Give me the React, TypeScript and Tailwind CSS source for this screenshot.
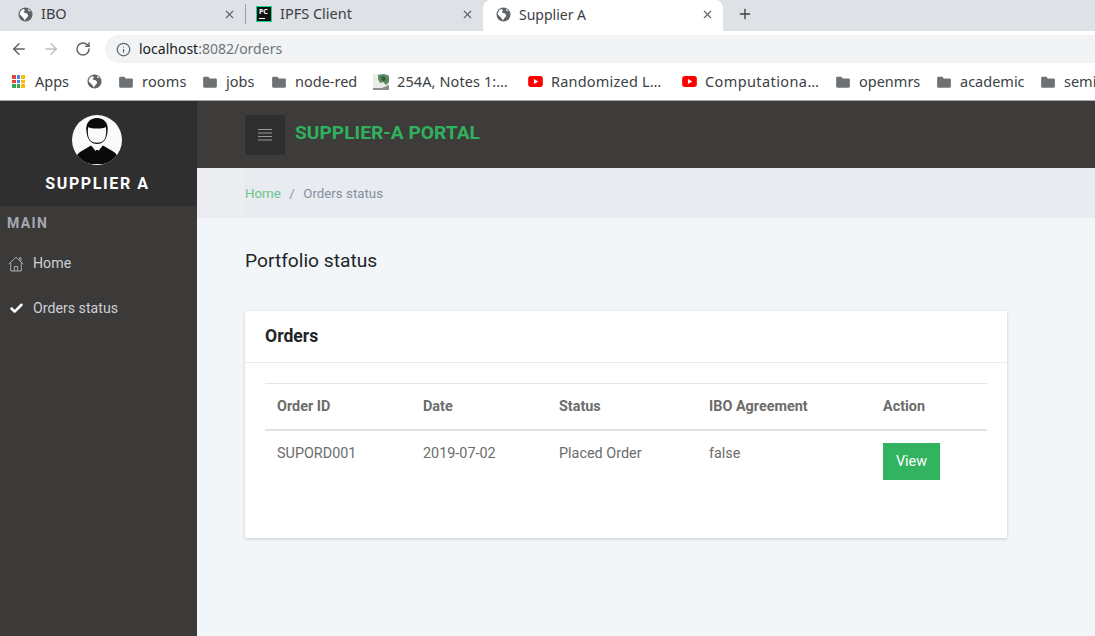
import { Check, Info, Plus, RotateCw, X, ArrowLeft, ArrowRight } from "lucide-react";

function Globe({ className }: { className?: string }) {
  return (
    <svg viewBox="0 0 16 16" className={className}>
      <circle cx="8" cy="8" r="7.500" fill="#5f6368" />
      <path
        d="M7.200 14.400c-.2-1-1.200-1.700-1.500-2.700L3 9 1.700 7.800C1.900 5 3.500 3 5.800 2.100L7.500 3.500 6.200 5l.6 1.200 2.400.4 1.600 1.800-.4 2-1.400 1.400-1.800 2.600zM10.500 2.200l.6 1.800 2.300.5.900 1.700c-.5-1.800-2-3.400-3.800-4z"
        fill="#fff"
      />
    </svg>
  );
}

function Folder() {
  return (
    <svg viewBox="0 0 16 14" className="h-[12px] w-[14px] shrink-0">
      <path d="M1.500 1h4.600l1.600 1.800h6.800c.8 0 1.500.6 1.500 1.400v8c0 .8-.7 1.400-1.500 1.400h-13C.7 13.600 0 13 0 12.200V2.400C0 1.600.7 1 1.500 1z" fill="#6f7274" />
    </svg>
  );
}

function YouTube() {
  return (
    <svg viewBox="0 0 16 12" className="h-[11px] w-[15px] shrink-0">
      <rect width="16" height="12" rx="3" fill="#f00" />
      <path d="M6.300 3.200v5.600L11 6z" fill="#fff" />
    </svg>
  );
}

function Thumb() {
  return (
    <svg viewBox="0 0 16 16" className="h-[16px] w-[16px] shrink-0">
      <rect width="16" height="16" fill="#e8ebe6" />
      <path d="M5 1l6-1 5 2v6l-3 3-3-3-3 1-2-4z" fill="#5b8a62" />
      <path d="M9 2l3 1 1 3-3 1-2-2z" fill="#2f5f3c" />
      <path d="M0 14l9 0 7-3v5H0z" fill="#8b8f8a" />
    </svg>
  );
}

function AppsGrid() {
  const colors = ["#ea4335", "#4285f4", "#fbbc04", "#ea4335", "#4285f4", "#fbbc04", "#34a853", "#34a853", "#fbbc04"];
  return (
    <div className="grid h-[13px] w-[13px] shrink-0 grid-cols-3 gap-[1px]">
      {colors.map((c, i) => (
        <span key={i} className="block h-[3.670px] w-[3.670px]" style={{ background: c }} />
      ))}
    </div>
  );
}

function Avatar() {
  return (
    <svg viewBox="0 0 50 50" className="h-[50px] w-[50px]">
      <clipPath id="avatar-clip">
        <circle cx="25" cy="25" r="25" />
      </clipPath>
      <circle cx="25" cy="25" r="25" fill="#fafafa" />
      <g clipPath="url(#avatar-clip)">
        <path d="M3 47c.5-5 2-8 5-10l11-6.500 6 5 6-5 11 6.500c3 2 4.500 5 5 10-7 1.500-14 2-22 2s-15-.5-22-2z" fill="#0a0a0a" />
        <path d="M19 30l6 8 6-8-1-3H20z" fill="#fafafa" />
        <path d="M23.800 35h2.400l.6 1.800-.8 7.200-.9 1-1-1-.8-7.200z" fill="#0a0a0a" />
        <path d="M14.500 17C13 8 18 3 25 3s12 5 10.500 14c-.3 3-1.200 6-3 8.500-2 2.500-5 3.500-7.500 3.500s-5.500-1-7.500-3.500c-1.800-2.500-2.700-5.500-3-8.500z" fill="#0a0a0a" />
        <path d="M16.200 12c3 2 14.600 2 17.600 0 .8 4.500.4 8.800-1.100 12-1.600 2.700-4.700 3.800-7.700 3.800s-6.100-1.100-7.700-3.800c-1.500-3.200-1.900-7.500-1.100-12z" fill="#fafafa" />
      </g>
    </svg>
  );
}

function Hamburger() {
  return (
    <svg viewBox="0 0 14 12" className="h-[12px] w-[14px]">
      <path d="M0 .5h14M0 4h14M0 7.500h14M0 11h14" stroke="#9a9a9a" strokeWidth="1" fill="none" />
    </svg>
  );
}

function HomeOutline() {
  return (
    <svg viewBox="0 0 16 16" className="h-[16px] w-[16px] shrink-0" fill="none" stroke="#b4b8be" strokeWidth="0.9">
      <path d="M.8 8L8 1.200 15.200 8M2.700 6.500V15h10.600V6.500M6.300 15v-4.500h3.400V15M11.500 3.500V1.800h1.500v3.200" />
    </svg>
  );
}

function ChromeBar() {
  return (
    <div className="font-['Noto_Sans',sans-serif] text-[14.500px] text-[#3c4043]">
      <div className="flex h-[31px] bg-[#dee1e6]">
        <div className="flex w-[245px] items-center pb-[3px] pl-[18px] pr-[9px]">
          <Globe className="h-[15px] w-[15px]" />
          <span className="ml-[8px] flex-1">IBO</span>
          <X size={13} strokeWidth={2} className="text-[#5f6368]" />
        </div>
        <div className="mt-[4px] h-[20px] w-px bg-[#9aa0a6]" />
        <div className="flex w-[237px] items-center pb-[3px] pl-[10px] pr-[9px]">
          <div className="relative h-[16px] w-[16px] border border-[#14d68c] bg-[#111]">
            <span className="absolute left-[2px] top-[1px] text-[7px] font-bold leading-[8px] text-white">PC</span>
            <span className="absolute bottom-[2px] left-[2px] h-px w-[6px] bg-white" />
          </div>
          <span className="ml-[8px] flex-1">IPFS Client</span>
          <X size={13} strokeWidth={2} className="text-[#5f6368]" />
        </div>
        <div className="flex w-[240px] items-center rounded-t-[8px] bg-white pb-[3px] pl-[13px] pr-[9px]">
          <Globe className="h-[15px] w-[15px]" />
          <span className="ml-[8px] flex-1 text-[14px]">Supplier A</span>
          <X size={13} strokeWidth={2} className="text-[#5f6368]" />
        </div>
        <div className="flex items-center pb-[3px] pl-[14px]">
          <Plus size={16} strokeWidth={2} className="text-[#3c4043]" />
        </div>
      </div>
      <div className="flex h-[32px] items-center bg-white pl-[10px] pt-[4px]">
        <ArrowLeft size={18} strokeWidth={2} className="text-[#5f6368]" />
        <ArrowRight size={18} strokeWidth={2} className="ml-[14px] text-[#bdc1c6]" />
        <RotateCw size={16} strokeWidth={2.200} className="ml-[15px] text-[#5f6368]" />
        <div className="ml-[14px] flex h-[28px] flex-1 items-center rounded-l-full bg-[#f1f3f4] pl-[11px]">
          <Info size={15} strokeWidth={2} className="text-[#5f6368]" />
          <span className="mb-[2px] ml-[8px] text-[14px] text-[#202124]">
            localhost<span className="text-[#70757a]">:8082/orders</span>
          </span>
        </div>
      </div>
      <div className="flex h-[37px] items-center overflow-hidden whitespace-nowrap bg-white pl-[12px] [&>*]:shrink-0">
        <AppsGrid />
        <span className="ml-[10px] w-[36px]">Apps</span>
        <Globe className="ml-[16px] h-[15px] w-[15px]" />
        <div className="ml-[17px] flex items-center gap-[9px]"><Folder /><span className="w-[44px] tracking-[0.2px]">rooms</span></div>
        <div className="ml-[17px] flex items-center gap-[9px]"><Folder /><span className="w-[29px]">jobs</span></div>
        <div className="ml-[17px] flex items-center gap-[9px]"><Folder /><span className="w-[62px]">node-red</span></div>
        <div className="ml-[16px] flex items-center gap-[8px]"><Thumb /><span className="w-[112px] tracking-[0.1px]">254A, Notes 1:…</span></div>
        <div className="ml-[19px] flex items-center gap-[8px]"><YouTube /><span className="w-[111px] tracking-[0.2px]">Randomized L…</span></div>
        <div className="ml-[20px] flex items-center gap-[8px]"><YouTube /><span className="w-[114px] tracking-[0.4px]">Computationa…</span></div>
        <div className="ml-[17px] flex items-center gap-[9px]"><Folder /><span className="w-[61px]">openmrs</span></div>
        <div className="ml-[17px] flex items-center gap-[9px]"><Folder /><span className="w-[64px]">academic</span></div>
        <div className="ml-[17px] flex items-center gap-[9px]"><Folder /><span>seminars</span></div>
      </div>
    </div>
  );
}

function Sidebar() {
  return (
    <aside className="flex w-[197px] shrink-0 flex-col bg-[#3c3a38]">
      <div className="flex h-[105px] flex-col items-center bg-[#2f2f2f] pr-[4px] pt-[14px]">
        <Avatar />
        <div className="ml-[2px] mt-[9px] text-[16px] font-bold leading-[20px] tracking-[1.600px] text-white">SUPPLIER A</div>
      </div>
      <div className="pl-[7px] pt-[8px] text-[14px] font-bold leading-[18px] tracking-[1.400px] text-[#a4a9b3]">MAIN</div>
      <div className="mt-[9px] flex h-[45px] items-center pl-[8px] text-[14.200px] text-[#ccd0d6]">
        <HomeOutline />
        <span className="ml-[9px]">Home</span>
      </div>
      <div className="flex h-[45px] items-center pl-[9px] text-[14.200px] text-[#ccd0d6]">
        <Check size={15} strokeWidth={4} className="text-white" />
        <span className="ml-[9px]">Orders status</span>
      </div>
    </aside>
  );
}

const headers = ["Order ID", "Date", "Status", "IBO Agreement", "Action"];

export default function App() {
  return (
    <div className="flex h-[636px] w-[1095px] flex-col overflow-hidden font-['Roboto',sans-serif]">
      <ChromeBar />
      <div className="h-px bg-[#a9a9a9]" />
      <div className="flex flex-1">
        <Sidebar />
        <main className="flex flex-1 flex-col bg-[#f2f6f9]">
          <div className="flex h-[67px] items-center bg-[#3e3c3a] pl-[48px]">
            <div className="flex h-[40px] w-[40px] items-center justify-center bg-[#2f2f2f]">
              <Hamburger />
            </div>
            <div className="mb-[2px] ml-[10px] text-[19.200px] font-bold text-[#30b15e]">SUPPLIER-A PORTAL</div>
          </div>
          <div className="flex h-[50px] bg-[#ecedf0]">
            <div className="ml-[48px] flex flex-1 items-center bg-[#e8ebf0] pt-[1px] text-[13.300px]">
              <span className="text-[#6cc58c]">Home</span>
              <span className="mx-[8.500px] text-[#8b93a3]">/</span>
              <span className="text-[#868e9e]">Orders status</span>
            </div>
          </div>
          <div className="pl-[48px] pr-[88px] pt-[32px]">
            <h1 className="text-[19.200px] leading-[22px] text-[#212529]">Portfolio status</h1>
            <section className="mt-[39px] h-[227px] bg-white shadow-[0_1px_3px_rgba(0,0,0,0.18)]">
              <div className="flex h-[52px] items-center border-b border-[#e9ecef] px-[20px] text-[17.600px] font-bold text-[#212529]">
                Orders
              </div>
              <div className="px-[20px] pt-[20px]">
                <table className="w-full table-fixed border-collapse text-left text-[14.400px] text-[#6c6c6c]">
                  <colgroup>
                    <col className="w-[146px]" />
                    <col className="w-[136px]" />
                    <col className="w-[150px]" />
                    <col className="w-[174px]" />
                    <col />
                  </colgroup>
                  <thead>
                    <tr className="h-[46px] border-t border-b-2 border-t-[#e3e4e6] border-b-[#dee2e6]">
                      {headers.map((h) => (
                        <th key={h} className="pl-[12px] pt-[2px] font-bold">{h}</th>
                      ))}
                    </tr>
                  </thead>
                  <tbody>
                    <tr>
                      <td className="pl-[12px] pt-[13px] align-top leading-[20px]">SUPORD001</td>
                      <td className="pl-[12px] pt-[13px] align-top leading-[20px]">2019-07-02</td>
                      <td className="pl-[12px] pt-[13px] align-top leading-[20px]">Placed Order</td>
                      <td className="pl-[12px] pt-[13px] align-top leading-[20px]">false</td>
                      <td className="pl-[12px] pt-[12px] align-top">
                        <button className="h-[37px] w-[57px] bg-[#32b35f] pt-[2px] text-[14.400px] text-white">View</button>
                      </td>
                    </tr>
                  </tbody>
                </table>
              </div>
            </section>
          </div>
        </main>
      </div>
    </div>
  );
}
